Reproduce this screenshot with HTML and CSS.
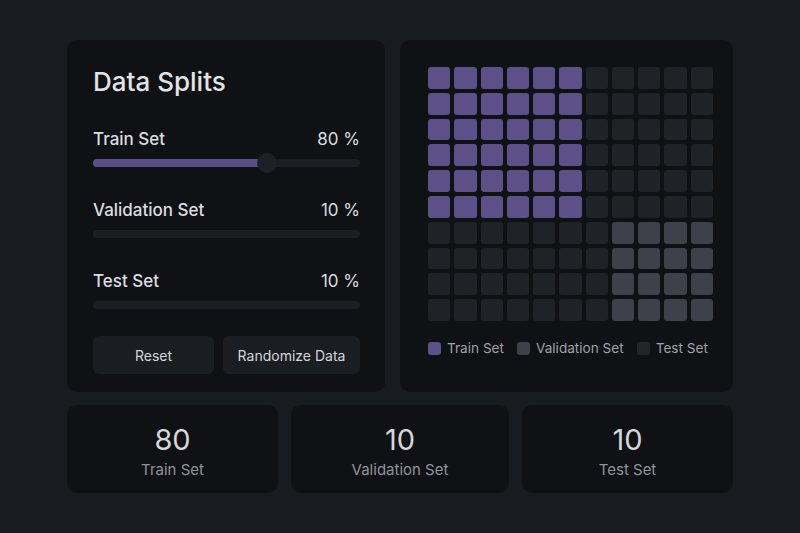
FILE: index.html
```html
<!DOCTYPE html>
<html>
<head>
<meta charset="utf-8">
<link rel="stylesheet" href="styles.css">
</head>
<body>
<div class="page">
  <div class="top">
    <section class="card controls">
      <h1 class="title">Data Splits</h1>
      <div class="split">
        <div class="split-head"><span>Train Set</span><span class="pct">80 %</span></div>
        <div class="track"><div class="fill" style="width:65%"></div><div class="thumb" style="left:65%"></div></div>
      </div>
      <div class="split">
        <div class="split-head"><span>Validation Set</span><span class="pct">10 %</span></div>
        <div class="track"></div>
      </div>
      <div class="split">
        <div class="split-head"><span>Test Set</span><span class="pct">10 %</span></div>
        <div class="track"></div>
      </div>
      <div class="buttons">
        <button class="btn">Reset</button>
        <button class="btn">Randomize Data</button>
      </div>
    </section>
    <section class="card viz">
      <div class="grid">
        <div class="cell t"></div><div class="cell t"></div><div class="cell t"></div><div class="cell t"></div><div class="cell t"></div><div class="cell t"></div><div class="cell e"></div><div class="cell e"></div><div class="cell e"></div><div class="cell e"></div><div class="cell e"></div>
        <div class="cell t"></div><div class="cell t"></div><div class="cell t"></div><div class="cell t"></div><div class="cell t"></div><div class="cell t"></div><div class="cell e"></div><div class="cell e"></div><div class="cell e"></div><div class="cell e"></div><div class="cell e"></div>
        <div class="cell t"></div><div class="cell t"></div><div class="cell t"></div><div class="cell t"></div><div class="cell t"></div><div class="cell t"></div><div class="cell e"></div><div class="cell e"></div><div class="cell e"></div><div class="cell e"></div><div class="cell e"></div>
        <div class="cell t"></div><div class="cell t"></div><div class="cell t"></div><div class="cell t"></div><div class="cell t"></div><div class="cell t"></div><div class="cell e"></div><div class="cell e"></div><div class="cell e"></div><div class="cell e"></div><div class="cell e"></div>
        <div class="cell t"></div><div class="cell t"></div><div class="cell t"></div><div class="cell t"></div><div class="cell t"></div><div class="cell t"></div><div class="cell e"></div><div class="cell e"></div><div class="cell e"></div><div class="cell e"></div><div class="cell e"></div>
        <div class="cell t"></div><div class="cell t"></div><div class="cell t"></div><div class="cell t"></div><div class="cell t"></div><div class="cell t"></div><div class="cell e"></div><div class="cell e"></div><div class="cell e"></div><div class="cell e"></div><div class="cell e"></div>
        <div class="cell e"></div><div class="cell e"></div><div class="cell e"></div><div class="cell e"></div><div class="cell e"></div><div class="cell e"></div><div class="cell e"></div><div class="cell v"></div><div class="cell v"></div><div class="cell v"></div><div class="cell v"></div>
        <div class="cell e"></div><div class="cell e"></div><div class="cell e"></div><div class="cell e"></div><div class="cell e"></div><div class="cell e"></div><div class="cell e"></div><div class="cell v"></div><div class="cell v"></div><div class="cell v"></div><div class="cell v"></div>
        <div class="cell e"></div><div class="cell e"></div><div class="cell e"></div><div class="cell e"></div><div class="cell e"></div><div class="cell e"></div><div class="cell e"></div><div class="cell v"></div><div class="cell v"></div><div class="cell v"></div><div class="cell v"></div>
        <div class="cell e"></div><div class="cell e"></div><div class="cell e"></div><div class="cell e"></div><div class="cell e"></div><div class="cell e"></div><div class="cell e"></div><div class="cell v"></div><div class="cell v"></div><div class="cell v"></div><div class="cell v"></div>
      </div>
      <div class="legend">
        <span class="item"><i class="sw t"></i>Train Set</span>
        <span class="item"><i class="sw v"></i>Validation Set</span>
        <span class="item"><i class="sw e"></i>Test Set</span>
      </div>
    </section>
  </div>
  <div class="bottom">
    <div class="card stat"><div class="num">80</div><div class="lbl">Train Set</div></div>
    <div class="card stat"><div class="num">10</div><div class="lbl">Validation Set</div></div>
    <div class="card stat"><div class="num">10</div><div class="lbl">Test Set</div></div>
  </div>
</div>
</body>
</html>
```

FILE: styles.css
```css
* { box-sizing: border-box; }
html, body { margin: 0; padding: 0; }
body {
  background: #181b1f;
  font-family: Inter, "Noto Sans", sans-serif;
  color: #d6d8dc;
  width: 800px;
  height: 533px;
  overflow: hidden;
}
.page {
  padding: 40px 0 0 67px;
  width: 734px;
  box-sizing: content-box;
}
.top {
  display: grid;
  grid-template-columns: 318px 333px;
  gap: 15px;
  height: 351px;
}
.card {
  background: #0f1114;
  border-radius: 10px;
}
.controls {
  padding: 27px 25px 18px 26px;
  display: flex;
  flex-direction: column;
}
.title {
  margin: 0 0 32px;
  font-size: 26px;
  line-height: 30px;
  font-weight: 500;
  color: #e2e3e5;
}
.split { margin-bottom: 33px; }
.split:nth-of-type(3) { margin-bottom: 27px; }
.split-head {
  display: flex;
  justify-content: space-between;
  align-items: baseline;
  font-size: 17px;
  line-height: 20px;
  color: #dcdde0;
  font-weight: 500;
  margin-bottom: 10px;
}
.pct { font-weight: 400; }
.track {
  position: relative;
  height: 8px;
  border-radius: 4px;
  background: #1b1e22;
}
.fill {
  height: 100%;
  border-radius: 4px 0 0 4px;
  background: #5b4e86;
}
.thumb {
  position: absolute;
  top: 50%;
  width: 20px;
  height: 20px;
  margin: -10px 0 0 -10px;
  border-radius: 50%;
  background: #1d2024;
}
.buttons {
  display: grid;
  grid-template-columns: 121px 1fr;
  gap: 9px;
}
.btn {
  height: 38px;
  border: 0;
  border-radius: 6px;
  background: #1a1d21;
  color: #d4d6da;
  font-family: Inter, "Noto Sans", sans-serif;
  font-size: 14px;
  font-weight: 400;
}
.viz {
  padding: 27px 20px 0 28px;
}
.grid {
  display: grid;
  grid-template-columns: repeat(11, 1fr);
  grid-template-rows: repeat(10, 1fr);
  gap: 4px;
  width: 285px;
  height: 254px;
}
.cell { border-radius: 3px; }
.t { background: #5c5088; }
.v { background: #3e4149; }
.e { background: #1f2227; }
.legend {
  display: flex;
  gap: 13px;
  margin-top: 19px;
  font-size: 13.6px;
  line-height: 17px;
  color: #9ea2a9;
  white-space: nowrap;
  width: 300px;
}
.item { display: flex; align-items: center; }
.sw {
  display: inline-block;
  flex: none;
  width: 13px;
  height: 13px;
  border-radius: 3px;
  margin-right: 6px;
}
.sw.e { background: #22252a; }
.bottom {
  display: grid;
  grid-template-columns: 211px 218px 211px;
  gap: 13px;
  margin-top: 14px;
  height: 88px;
}
.stat {
  display: flex;
  flex-direction: column;
  align-items: center;
  padding-top: 18px;
}
.num {
  font-size: 29px;
  line-height: 34px;
  color: #d4d6da;
  font-weight: 400;
}
.lbl {
  font-size: 15px;
  line-height: 20px;
  margin-top: 3px;
  color: #8f949c;
}
```
